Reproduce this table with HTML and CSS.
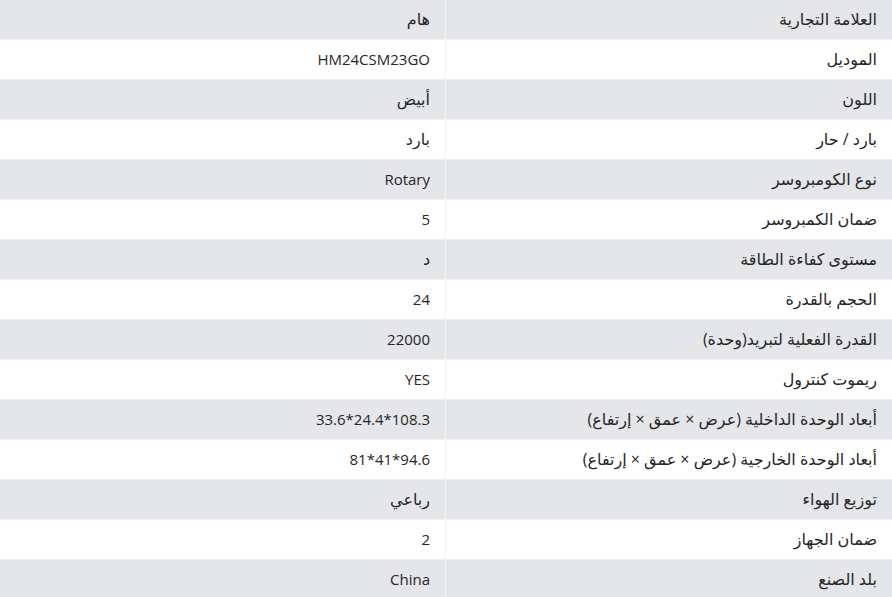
FILE: index.html
```html
<!DOCTYPE html>
<html lang="ar" dir="rtl">
<head>
<meta charset="utf-8">
<link rel="stylesheet" href="styles.css">
</head>
<body>
<table class="specs">
<tbody>
<tr><th>العلامة التجارية</th><td class="ar">هام</td></tr>
<tr><th>الموديل</th><td>HM24CSM23GO</td></tr>
<tr><th>اللون</th><td class="ar">أبيض</td></tr>
<tr><th>بارد / حار</th><td class="ar">بارد</td></tr>
<tr><th>نوع الكومبروسر</th><td>Rotary</td></tr>
<tr><th>ضمان الكمبروسر</th><td>5</td></tr>
<tr><th>مستوى كفاءة الطاقة</th><td class="ar">د</td></tr>
<tr><th>الحجم بالقدرة</th><td>24</td></tr>
<tr><th>القدرة الفعلية لتبريد(وحدة)</th><td>22000</td></tr>
<tr><th>ريموت كنترول</th><td>YES</td></tr>
<tr><th>أبعاد الوحدة الداخلية (عرض × عمق × إرتفاع)</th><td><span dir="ltr">33.6*24.4*108.3</span></td></tr>
<tr><th>أبعاد الوحدة الخارجية (عرض × عمق × إرتفاع)</th><td><span dir="ltr">81*41*94.6</span></td></tr>
<tr><th>توزيع الهواء</th><td class="ar">رباعي</td></tr>
<tr><th>ضمان الجهاز</th><td>2</td></tr>
<tr><th>بلد الصنع</th><td>China</td></tr>
</tbody>
</table>
</body>
</html>
```

FILE: styles.css
```css
html, body {
  margin: 0;
  padding: 0;
  background: #ffffff;
}
body {
  font-family: "Open Sans", "DejaVu Sans", sans-serif;
  font-size: 15px;
  color: #262626;
  overflow: hidden;
}
.specs {
  width: 892px;
  border-collapse: collapse;
  margin-top: -1px;
  table-layout: fixed;
}
.specs tr {
  height: 40px;
}
.specs tr:nth-child(odd) {
  background: #e5e6ea;
}
.specs tr:nth-child(even) {
  background: #ffffff;
}
.specs th,
.specs td {
  font-weight: normal;
  text-align: right;
  padding: 0 15px;
  vertical-align: middle;
  white-space: nowrap;
  border-bottom: 1px solid #eeeff2;
  line-height: 20px;
}
.specs th {
  width: 416px;
  font-size: 16px;
  border-left: 1px solid #f2f3f5;
}
.specs td.ar {
  font-size: 16px;
}
```
